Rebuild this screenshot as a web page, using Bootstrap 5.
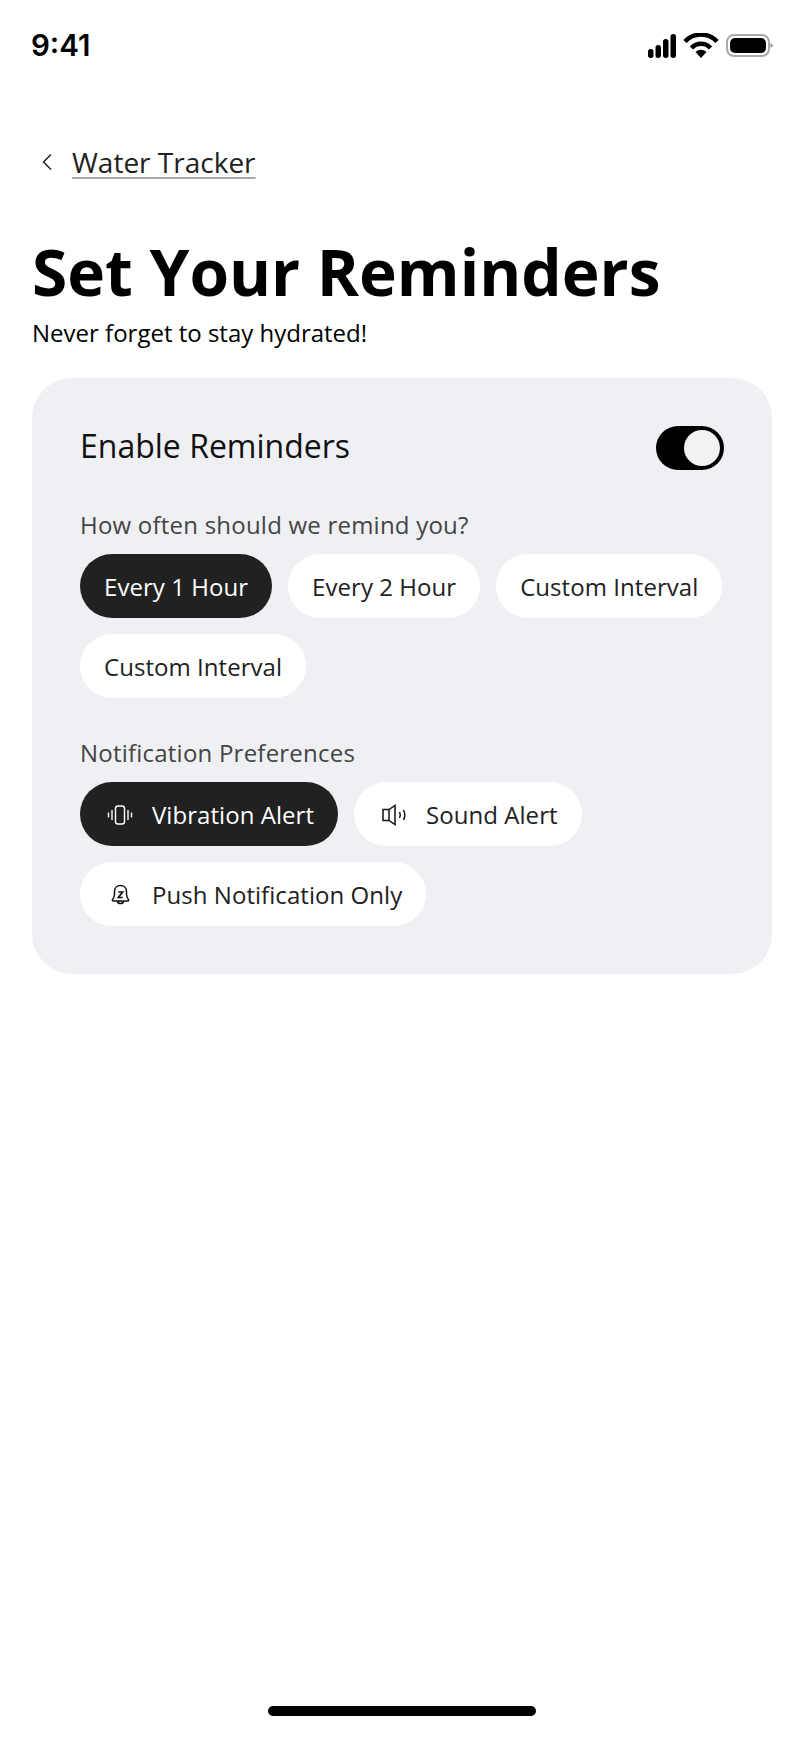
<!DOCTYPE html>
<html lang="en"><head><meta charset="utf-8"><title>Set Your Reminders</title>
<link href="https://cdn.jsdelivr.net/npm/bootstrap@5.3.0/dist/css/bootstrap.min.css" rel="stylesheet">
<style>
html,body{margin:0;background:#fff}
.app-screen{width:804px;height:1748px;display:flex;flex-direction:column;padding:0 32px;font-family:"Open Sans","Noto Sans",sans-serif;color:#000}
.status-row{height:88px;flex:none;margin-right:-2px}
.status-time{font-family:Inter,"Liberation Sans",sans-serif;font-weight:600;font-size:29.500px;line-height:1;margin-left:-1px}
.back-row{margin-top:50px;height:48px;gap:18px;color:#212121}
.back-text{font-size:28px;line-height:40px;color:#212121;text-decoration:underline;text-decoration-thickness:2px;text-underline-offset:4px;text-decoration-color:#a8a8a8}
.page-title{font-size:64px;font-weight:700;line-height:80px;margin:46px 0 0}
.page-sub{font-size:24px;line-height:32px;margin:5px 0 0}
.panel{background:#eff0f4;border-radius:40px;padding:48px;margin-top:29px}
.panel-head{font-size:32px;line-height:44px;color:#111;padding-bottom:2px;margin-top:-2px}
.tog{width:68px;height:44px;border-radius:22px;background:#000;position:relative}
.tog::after{content:"";position:absolute;top:4px;right:4px;width:36px;height:36px;border-radius:50%;background:#f2f2f2}
.grp-label{font-size:24px;line-height:32px;color:#444;padding-top:15px;margin:0 0 13px;letter-spacing:.22px}
.chip-wrap{display:flex;flex-wrap:wrap;gap:16px}
.chip-item{height:64px;border-radius:32px;background:#fff;color:#212121;padding:2px 24px 0;font-size:24px;letter-spacing:.05px;display:inline-flex;align-items:center;gap:16px;border:0}
.chip-item.is-on{background:#212121;color:#fff}
.home-bar{width:268px;height:10px;border-radius:5px;background:#000}
</style></head><body>
<div class="app-screen">
 <div class="status-row d-flex justify-content-between align-items-center pt-1">
  <span class="status-time">9:41</span>
  <svg width="126" height="26" viewBox="0 0 126 26" aria-hidden="true">
   <g fill="#000"><rect x="0" y="16" width="5.500" height="9" rx="2.700"/><rect x="7.500" y="12" width="5.500" height="13" rx="2.700"/><rect x="15" y="6" width="5.500" height="19" rx="2.700"/><rect x="22.500" y="1" width="5.500" height="24" rx="2.700"/></g>
   <path d="M37 8.500a22 22 0 0 1 32 0" fill="none" stroke="#000" stroke-width="4.500"/>
   <path d="M43.500 15a13 13 0 0 1 19 0" fill="none" stroke="#000" stroke-width="4.500"/>
   <path d="M53 25l-5.500-6a8 8 0 0 1 11 0z" fill="#000"/>
   <rect x="79" y="2" width="42" height="21" rx="7" fill="none" stroke="#aaa" stroke-width="2"/>
   <rect x="82" y="5" width="36" height="15" rx="5" fill="#000"/>
   <path d="M122.500 10l3 2.500-3 2.500z" fill="#999"/>
  </svg>
 </div>
 <div class="back-row d-flex align-items-center">
  <svg class="ms-2" width="14" height="18" viewBox="0 0 14 18" aria-hidden="true"><path d="M11 1.500L3.500 9l7.500 7.500" fill="none" stroke="#212121" stroke-width="1.500"/></svg>
  <a class="back-text" href="#">Water Tracker</a>
 </div>
 <h1 class="page-title">Set Your Reminders</h1>
 <p class="page-sub">Never forget to stay hydrated!</p>
 <div class="panel">
  <div class="d-flex justify-content-between align-items-center mb-4">
   <span class="panel-head">Enable Reminders</span>
   <span class="tog"></span>
  </div>
  <p class="grp-label">How often should we remind you?</p>
  <div class="chip-wrap mb-4">
   <button class="chip-item is-on">Every 1 Hour</button>
   <button class="chip-item">Every 2 Hour</button>
   <button class="chip-item">Custom Interval</button>
   <button class="chip-item">Custom Interval</button>
  </div>
  <p class="grp-label">Notification Preferences</p>
  <div class="chip-wrap">
   <button class="chip-item is-on"><svg width="32" height="32" viewBox="0 0 32 32" fill="none" stroke="#fff" stroke-width="1.400" aria-hidden="true"><rect x="11.500" y="7" width="9" height="18" rx="2.500"/><path d="M8 11v10M4.500 13.500v5M24 11v10M27.500 13.500v5"/></svg>Vibration Alert</button>
   <button class="chip-item"><svg width="32" height="32" viewBox="0 0 32 32" fill="none" stroke="#111" stroke-width="1.500" aria-hidden="true"><path d="M5 10.500h6L17 6.500v19l-6-4H5zM11 10.500v11"/><path d="M21.500 13c1.100 2 1.100 4 0 6M25.500 11c1.700 3.300 1.700 6.700 0 10"/></svg>Sound Alert</button>
   <button class="chip-item"><svg width="32" height="32" viewBox="0 0 32 32" fill="none" stroke="#111" stroke-width="1.500" aria-hidden="true"><path d="M16.500 6.500c-3.800 0-6 2.700-6 6v3c0 2-1 3.700-2 5.200-.4.700 0 1.300.8 1.300h14.400c.8 0 1.200-.6.800-1.300-1-1.500-2-3.200-2-5.200v-3c0-3.300-2.200-6-6-6zM13.500 22.500c.6 2.700 5.400 2.700 6 0"/><path d="M14.300 13h4.400l-4.400 5.500h4.400" stroke-width="1.700"/></svg>Push Notification Only</button>
  </div>
 </div>
 <div class="mt-auto mb-4 pb-2 d-flex justify-content-center"><div class="home-bar"></div></div>
</div>
<script src="https://cdn.jsdelivr.net/npm/bootstrap@5.3.0/dist/js/bootstrap.bundle.min.js"></script>
</body></html>
